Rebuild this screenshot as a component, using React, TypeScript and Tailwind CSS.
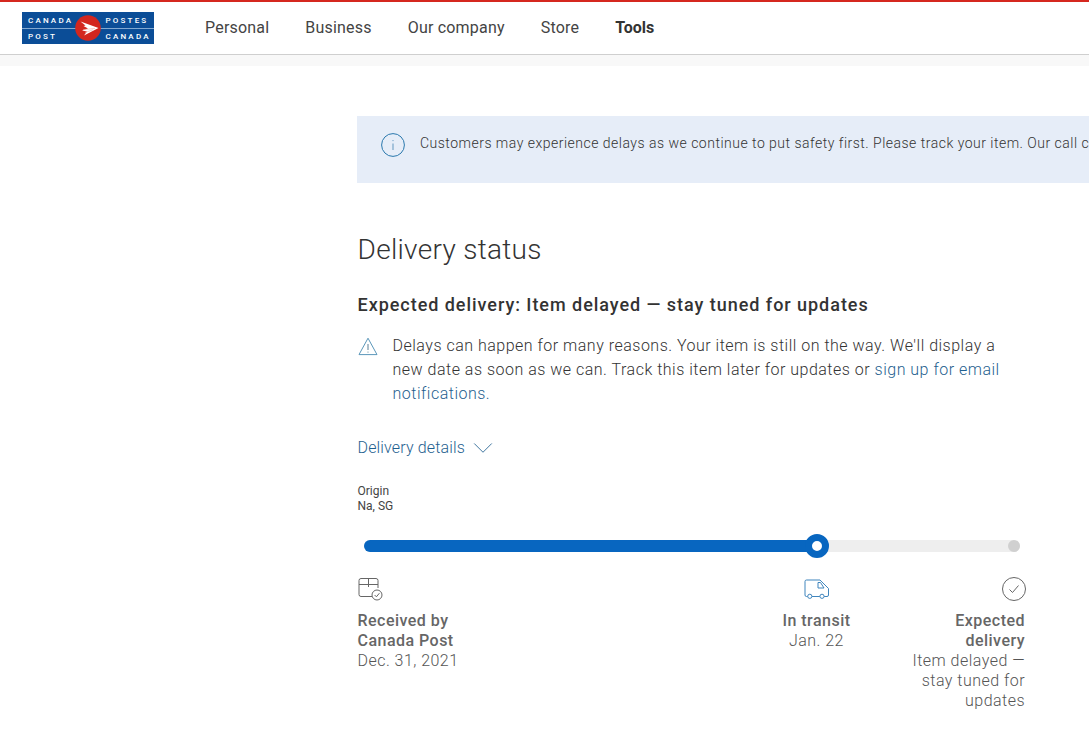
import { ChevronDown } from 'lucide-react';

const navItems = ['Personal', 'Business', 'Our company', 'Store'];

function Logo() {
  return (
    <svg width="132" height="32" viewBox="0 0 132 32" className="block">
      <rect width="132" height="32" fill="#0b4d97" />
      <rect x="0" y="16" width="132" height="0.8" fill="#9fc0e0" />
      <g fill="#fff" fontFamily="Roboto, sans-serif" fontSize="8" fontWeight="500" letterSpacing="2.2">
        <text x="6" y="11.200">CANADA</text>
        <text x="6" y="26.800">POST</text>
        <text x="83.500" y="11.200">POSTES</text>
        <text x="83.500" y="26.800">CANADA</text>
      </g>
      <circle cx="66" cy="16" r="12.800" fill="#d3261e" />
      <path d="M58.500 9.500 L76.500 16 L62 23.500 L65 19.500 L60 18.500 L66 16.500 L61.500 14 L63.500 13.500 Z" fill="#fff" />
      <path d="M61 17.700 L73 16.400 M63 20.500 L71 17.800" stroke="#f0a8a0" strokeWidth="0.6" />
    </svg>
  );
}

function InfoIcon() {
  return (
    <svg width="24" height="24" viewBox="0 0 24 24" fill="none" className="shrink-0">
      <circle cx="12" cy="12" r="11.400" stroke="#2a78ad" strokeWidth="1" />
      <path d="M12 10.500V17" stroke="#6d9fc4" strokeWidth="1.100" />
      <circle cx="12" cy="7.600" r="0.700" fill="#6d9fc4" />
    </svg>
  );
}

function WarnIcon() {
  return (
    <svg width="20" height="19" viewBox="0 0 20 19" fill="none" className="mt-[3px] shrink-0">
      <path d="M10 1.200 L19 17.600 H1 Z" stroke="#5b97ba" strokeWidth="1" strokeLinejoin="round" />
      <path d="M10 7V13" stroke="#5b7f95" strokeWidth="1" />
      <circle cx="10" cy="15" r="0.600" fill="#5b7f95" />
    </svg>
  );
}

function BoxIcon() {
  return (
    <svg width="25" height="24" viewBox="0 0 25 24" fill="none">
      <path d="M14 19.500H3a2 2 0 0 1-2-2V3.500a2 2 0 0 1 2-2h15a2 2 0 0 1 2 2V11" stroke="#666" strokeWidth="1" />
      <path d="M1 7.500H20M10.500 1.500V10" stroke="#666" strokeWidth="1" />
      <circle cx="19" cy="18" r="5" fill="#fff" stroke="#666" strokeWidth="1" />
      <path d="M16.600 18l1.800 1.800 3-3.600" stroke="#666" strokeWidth="1" />
    </svg>
  );
}

function VanIcon() {
  return (
    <svg width="26" height="20" viewBox="0 0 26 20" fill="none" stroke="#3f85bd" strokeWidth="1">
      <path d="M3.500 17.500H2.500a1.500 1.500 0 0 1-1.500-1.500V2.500A1.500 1.500 0 0 1 2.500 1H16l8.500 8.500V16a1.500 1.500 0 0 1-1.500 1.500h-2.800" />
      <path d="M8 17.500h7.800" />
      <circle cx="5.800" cy="17.300" r="2.100" />
      <circle cx="18" cy="17.300" r="2.100" />
      <path d="M14 3.500h2.500l3.500 5.500h-6z" />
    </svg>
  );
}

function CheckIcon() {
  return (
    <svg width="24" height="24" viewBox="0 0 24 24" fill="none">
      <circle cx="12" cy="12" r="11.500" stroke="#666" strokeWidth="1" />
      <path d="M7.500 12.500l3 3 6-7" stroke="#666" strokeWidth="1" />
    </svg>
  );
}

export default function App() {
  return (
    <div className="h-[751px] w-[1089px] overflow-hidden bg-white font-['Roboto',sans-serif] text-[#333]">
      {/* Header */}
      <header className="flex h-[55px] items-center border-t-2 border-b border-t-[#d5281f] border-b-[#cfcfcf] pl-[22px]">
        <Logo />
        <nav className="ml-[51px] flex items-center gap-9 text-base tracking-[0.2px] text-[#444]">
          {navItems.map((item) => (
            <span key={item}>{item}</span>
          ))}
          <span className="font-bold tracking-normal text-[#333]">Tools</span>
        </nav>
      </header>
      <div className="h-[11px] bg-[#f8f8f8]" />

      <main className="pl-[357px] pt-[50px]">
        {/* Notice */}
        <div className="flex h-[67px] items-center gap-[15px] overflow-hidden whitespace-nowrap bg-[#e6edf8] pb-[9px] pl-6 text-sm font-light tracking-[0.49px] text-[#333]">
          <InfoIcon />
          <span className="mb-[4px]">
            Customers may experience delays as we continue to put safety first. Please track your item. Our call centre is
            experiencing high volumes.
          </span>
        </div>

        <div className="w-[669px] pl-[0.5px]">
          <h1 className="mt-[48px] text-[28px] font-light leading-[38px] tracking-[0.3px] text-[#333]">Delivery status</h1>
          <h2 className="mt-[24px] text-lg font-medium leading-6 tracking-[0.96px] text-[#333]">
            Expected delivery: Item delayed — stay tuned for updates
          </h2>

          <div className="mt-[17px] flex gap-[15px]">
            <WarnIcon />
            <p className="w-[620px] text-base font-light leading-6 tracking-[0.5px] text-[#333]">
              Delays can happen for many reasons. Your item is still on the way. We'll display a new date as soon as we can.
              Track this item later for updates or <span className="text-[#1f5f8f]">sign up for email notifications.</span>
            </p>
          </div>

          <div className="mt-[30px] flex h-6 items-center gap-px text-base font-light leading-6 tracking-[0.15px] text-[#1f5f8f]">
            Delivery details
            <ChevronDown size={34} strokeWidth={0.6} />
          </div>

          <div className="mt-[24px] text-xs leading-[15px] text-[#444]">
            <div>Origin</div>
            <div>Na, SG</div>
          </div>

          {/* Progress */}
          <div className="relative ml-[6px] mt-[26px] h-3 w-[656px] rounded-full bg-[#eee]">
            <div className="h-3 w-[456px] rounded-full bg-[#0866c0]" />
            <div className="absolute left-[441px] top-[-6px] size-6 rounded-full border-[7px] border-[#0866c0] bg-white" />
            <div className="absolute right-0 top-0 size-3 rounded-full bg-[#d0d0d0]" />
          </div>

          <div className="mt-[25px] flex items-start text-base leading-5 tracking-[0.47px]">
            <div className="w-[130px]">
              <BoxIcon />
              <div className="mt-[10px] font-medium text-[#666]">
                Received by
                <br />
                Canada Post
              </div>
              <div className="font-light text-[#555]">Dec. 31, 2021</div>
            </div>
            <div className="ml-[279px] flex w-[100px] flex-col items-center pt-[2px] text-center">
              <VanIcon />
              <div className="mt-[12px] font-medium text-[#666]">In transit</div>
              <div className="font-light text-[#555]">Jan. 22</div>
            </div>
            <div className="ml-auto flex w-[130px] flex-col items-end text-right">
              <CheckIcon />
              <div className="mr-px mt-[10px] w-[84px] font-medium text-[#666]">Expected delivery</div>
              <div className="mr-px font-light text-[#555]">
                Item delayed —
                <br />
                stay tuned for
                <br />
                updates
              </div>
            </div>
          </div>
        </div>
      </main>
    </div>
  );
}
